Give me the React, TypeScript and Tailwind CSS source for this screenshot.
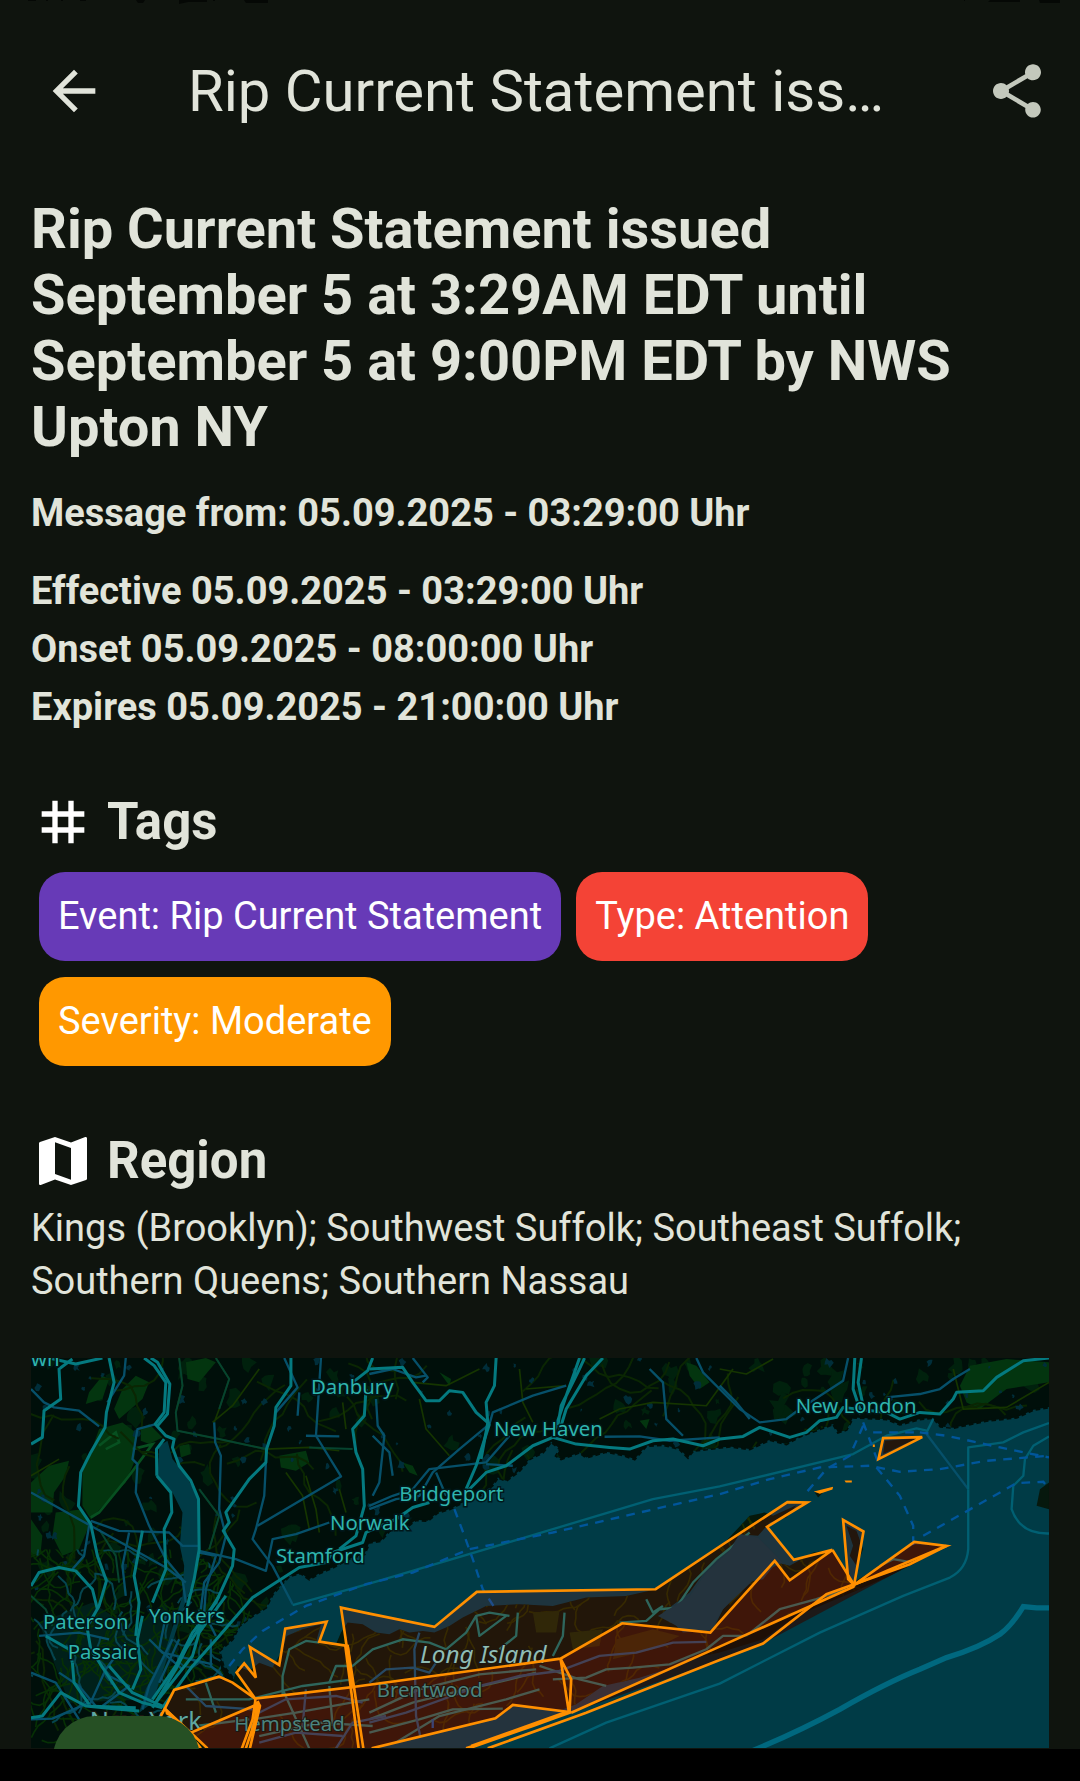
import React from "react";
import { MdArrowBack, MdMap, MdShare, MdTag } from "react-icons/md";

const title =
  "Rip Current Statement issued September 5 at 3:29AM EDT until September 5 at 9:00PM EDT by NWS Upton NY";

const times = [
  { label: "Effective", value: "05.09.2025 - 03:29:00 Uhr" },
  { label: "Onset", value: "05.09.2025 - 08:00:00 Uhr" },
  { label: "Expires", value: "05.09.2025 - 21:00:00 Uhr" },
];

const tags = [
  { text: "Event: Rip Current Statement", color: "bg-[#673ab7]" },
  { text: "Type: Attention", color: "bg-[#f44336]" },
  { text: "Severity: Moderate", color: "bg-[#ff9800]" },
];

// Small repeatable pseudo-random generator for the ground texture.
function seeded(seed: number) {
  let s = seed;
  return () => {
    s = (s * 16807) % 2147483647;
    return s / 2147483647;
  };
}

function buildPatches(count: number, seed: number, size: number) {
  const rnd = seeded(seed);
  return Array.from({ length: count }, () => {
    const x = 36 + rnd() * 3051;
    const y = 27 + rnd() * 900;
    const n = 9;
    const r = size * (0.4 + rnd());
    const pts = Array.from({ length: n }, (_, i) => {
      const a = (i / n) * Math.PI * 2;
      const k = r * (0.4 + rnd());
      return `${Math.round(x + Math.cos(a) * k)},${Math.round(y + Math.sin(a) * k * 1.2)}`;
    });
    return pts.join(" ");
  });
}

function buildTracks(count: number, seed: number, step: number, width = 3051) {
  const rnd = seeded(seed);
  return Array.from({ length: count }, () => {
    let x = 36 + rnd() * width;
    let y = 27 + rnd() * 1100;
    let a = rnd() * Math.PI * 2;
    const pts = [`${Math.round(x)},${Math.round(y)}`];
    for (let i = 0; i < 9; i++) {
      a += (rnd() - 0.5) * 1.3;
      x += Math.cos(a) * step;
      y += Math.sin(a) * step;
      pts.push(`${Math.round(x)},${Math.round(y)}`);
    }
    return pts.join(" ");
  });
}

const woods = buildPatches(220, 71, 20);
const ponds = buildPatches(220, 913, 8);
const lanes = buildTracks(120, 4021, 32);
const islandLanes = buildTracks(420, 577, 18);
const cityLanes = buildTracks(260, 8191, 20, 700);
const cityStreets = buildTracks(60, 1299, 16, 600);

const mainland =
  "M0 0H3100V172L3040 182L2990 205L2900 215L2800 236L2762 232L2740 206L2700 210L2640 226L2600 210L2560 208L2500 205L2480 242L2455 250L2440 225L2400 240L2340 262L2300 285L2250 272L2190 300L2130 292L2020 305L2005 325L1980 300L1930 287L1880 290L1845 330L1810 318L1760 308L1700 325L1680 310L1625 330L1610 320L1622 300L1595 278L1570 310L1530 330L1500 365L1460 395L1435 385L1420 408L1380 440L1330 460L1290 480L1255 490L1225 515L1190 512L1160 535L1110 545L1085 575L1050 580L1035 615L990 628L940 655L900 672L870 690L845 672L810 680L760 735L740 775L700 800L660 830L640 870L600 905L612 950L640 985L700 1050V1200H0Z";

const island =
  "M437 1080L465 1022L600 990L640 1000L655 950L690 965L720 940L760 955L790 900L802 860L850 840L905 825L890 880L950 885L965 850L985 820L1030 825L1070 850L1110 855L1140 840L1170 850L1210 845L1245 850L1290 830L1330 805L1400 770L1500 765L1600 770L1700 745L1820 740L1910 720L2010 655L2110 585L2190 500L2235 490L2260 500L2330 468L2300 505L2250 520L2215 560L2160 555L2130 600L2060 660L2010 730L1930 790L1990 850L2080 840L2110 780L2180 700L2230 690L2270 640L2310 650L2380 610L2440 602L2500 700L2600 640L2683 585L2780 590L2700 635L2600 685L2500 728L2330 800L2230 870L2100 910L2000 930L1940 960L1860 985L1750 1010L1670 1065L1610 1088L1500 1070L1430 1107L1250 1150L1050 1197H400Z";

const highways = [
  "M375 27L405 50L440 100L435 190L408 225L440 260L465 270L460 295L480 350L515 395L538 450L540 600L525 690L505 770",
  "M395 27L415 40L452 105L445 195L415 230",
  "M413 380L412 300L435 270M413 380L455 430L458 490L435 540L440 660L400 760",
  "M270 27L285 100L262 190L258 235L215 310L185 370L178 470L215 525L235 620L262 695L240 770L200 840",
  "M36 285L70 265L75 185L125 150L120 60L160 30M36 710L60 670L120 655L170 665L220 720L235 780",
  "M90 27L170 45L250 27M1060 27L1045 65L1000 100",
  "M815 27L815 110L770 175L765 230L742 300L740 340L690 390L620 490L630 520L612 545L645 600L640 650L590 760L520 850L470 950L400 1050",
  "M1040 120L1035 200L1000 240L1010 310L1030 360L1035 470L1010 560L960 600",
  "M430 1075L520 950L600 860L700 745L770 700L840 655L920 640L940 610L1030 580L1040 550L1130 510L1180 475L1230 460",
  "M400 1075L470 960L500 900L600 740M410 1060L520 920L540 850L620 740",
  "M1340 430L1400 370L1460 350L1540 290L1600 265L1670 285L1770 295L1830 300L1900 275L1960 270L2050 290L2100 270L2170 262L2220 235L2310 265L2360 250L2400 215L2450 205L2470 175L2600 190L2640 210L2700 190L2760 195L2800 150L2810 130L2890 125L2930 85L3010 35L3087 27",
  "M1605 245L1640 140L1680 27M1620 245L1640 180L1700 80L1750 27M1615 230L1625 170L1675 70L1695 27",
  "M1430 27L1425 110L1400 160L1405 220L1385 330M1050 60L1150 55L1180 100L1220 155L1260 155L1290 125L1330 130L1370 190L1410 225",
  "M1410 225L1370 350L1340 420M2505 27L2500 120L2520 180M2525 27L2515 100L2530 170",
  "M200 1070L300 1080L360 1085M36 1105L70 1100L125 1030L200 1070L350 1075",
  "M205 840L215 900L300 1030L370 1060L430 1075M160 940L165 1000L210 1065M340 1020L365 960L355 870L370 800",
  "M370 545L345 680L360 760L350 860M80 860L150 900L160 940M270 950L340 1030L430 1070",
];

const blueRoads = [
  "M36 120L75 160L105 175L180 185L240 232M320 27L315 80L265 160",
  "M410 225L355 240L340 330L355 345L350 430L390 530L440 630L490 690L500 760",
  "M585 220L588 280L605 320L600 480L620 560L600 640L555 700L545 780",
  "M795 27L835 115L770 190M740 340L735 440L710 540L700 570L760 650L820 765",
  "M36 430L215 530L440 655L500 700M905 27L890 260L965 382L715 530",
  "M215 515L300 545L400 548L450 550L490 590H540M540 605L650 630L740 665L760 570L830 555L930 520",
  "M1050 480L1130 450L1200 440L1240 370L1320 300L1410 225L1420 190L1540 140L1640 110",
  "M1050 470L1120 440L1180 420L1230 360L1400 340L1470 260",
  "M1400 345L1480 350M1250 370L1280 440M1180 27L1225 85L1210 100",
  "M1050 75L1120 60L1190 85L1220 80M1755 263L1860 262L1950 275L2100 265",
  "M2030 27L2050 70L2130 150L2160 180L2220 220L2300 210L2340 180L2470 95L2485 27",
  "M2100 110L2150 160L2190 210M2600 145L2700 135L2760 120L2800 90L2850 60",
  "M1890 60L1930 100L1940 210L1990 260M120 970L180 1010L230 1070M60 860L180 850L270 870",
  "M36 970L110 1000L180 1110M320 880L260 960L210 1070M330 550L310 650L320 740",
  "M540 610L590 620L560 720L555 790L590 860M440 800L420 900L490 960",
  "M840 130L835 200M860 260L960 262M2720 255L2845 420",
  "M36 1110L100 1108L210 1060M390 870L430 910L580 945M210 530L195 620L160 660",
  "M460 870L390 1010L370 1080M480 870L420 1000M270 980L330 1010L250 1070M575 870V950L610 980",
  "M1070 150L1075 230L1095 260L1080 400L1060 440M1060 260L1110 310L1120 380",
];

const minorRoads = [
  "M480 27L490 110L470 190L475 245L600 270L740 300L870 295L960 305",
  "M590 27L630 90L600 180L585 220M720 60L640 170L580 220",
  "M800 370L850 440L870 540M860 380L890 480L900 550M960 420L980 490",
  "M36 380L120 330M540 420L600 500L570 600M970 160L980 240",
  "M1180 100L1280 110L1380 60M1500 60L1510 160L1540 220M1520 120L1640 110",
  "M1200 150L1220 240L1290 320M1740 210L1800 180L1900 160L2060 170L2140 60",
  "M2100 60L2180 75L2260 30M2800 60L2830 180L2960 175L3087 100",
];

const islandRoads = [
  "M790 1040L790 980L810 900L860 875L900 880M930 1000L950 950L1000 950L1060 900L1150 870L1230 880L1280 900",
  "M1280 900L1340 850L1370 800L1410 790L1470 800M1370 800L1380 860L1460 800",
  "M1495 790L1490 860L1440 900M1635 790L1630 860L1600 920M1800 820L1880 815L1920 780L1970 775L2020 700L2090 630L2190 550",
  "M1050 1110L1180 1060L1300 1030L1430 1000L1550 970M1050 1150L1200 1110L1300 1080L1450 1078",
  "M1050 1090L1200 1020L1380 975L1550 960M1100 1197L1260 1100L1460 1050L1560 1020",
  "M1600 990L1700 985L1760 960L1840 955L1950 945L2060 900L2110 860L2180 860L2280 780L2390 750L2480 720",
  "M700 1110L830 1090L1050 1050M720 1160L900 1120L1060 1130M790 1020L870 1197M930 1010L940 1130",
  "M500 1050L690 1050L850 1010L1000 990M560 1000L590 1090M530 1130L690 1110",
  "M1880 750L1900 790L1930 770M1560 950L1680 990L1760 1010M2580 650L2620 630L2680 640",
];

const blueIslandRoads = [
  "M1050 1000L1100 960L1180 955L1230 970L1250 940M1200 850L1185 900L1190 1100L1210 1197",
  "M1050 1120L1160 1090L1380 1010L1500 980L1620 965L1740 920L1850 910L1960 880L2060 878",
  "M700 1100L800 1050L950 1040L1030 1060M860 1020L850 1130M500 1010L560 1070L700 1080",
  "M720 1180L830 1150L970 1160M950 1197L1000 1120L1100 1100",
];

const northZones = [
  "M965 775L1050 793L1245 833L1372 728L1908 720L2100 592L2303 459L2362 460L2242 533L2322 632L2438 602L2310 693L2265 635L2100 818L2072 850L1808 822L1623 928L1000 1013Z",
  "M708 1048L652 970L675 942L710 985L692 893L780 947L798 838L922 817L900 877L985 890L1000 1013Z",
  "M600 982L465 1022L437 1078L515 1150L708 1068V1048L640 1000Z",
  "M2590 267L2707 264L2576 330Z",
  "M2470 512L2531 547L2503 707L2485 690Z",
];

const southZones = [
  "M1000 1013L1623 928L1652 1088L1480 1067L1428 1107L1050 1197H1030Z",
  "M708 1048L1000 1013L1028 1197H688Z",
  "M515 1150L708 1068L680 1197H560Z",
  "M1623 928L1808 822L2072 850L2265 635L2310 693L2438 602L2503 707L1655 1090Z",
  "M2503 707L2683 578L2780 590L2540 690Z",
];

const outlines = [
  ...northZones,
  "M1623 928L1655 990L1650 1088L1480 1067L1428 1107L1057 1197M1623 928L1648 1088",
  "M1655 1088L1540 1130L1340 1197M1650 1090L1348 1197M1640 1088L1355 1190",
  "M437 1078L425 1100M437 1078L470 1112M515 1150L565 1197M515 1155L540 1197M532 1180L545 1197",
  "M708 1058L700 1110L668 1197M715 1055L722 1070L680 1197M722 1070L692 1197",
  "M985 890L1005 1020L1032 1197M978 890L1018 1197",
  "M1655 1090L2100 892L2503 712M2438 602L2503 707L2683 578L2780 590L2600 665L2503 707",
  "M2780 590L2670 645L2420 735L2230 883L2100 932L1700 1090L1405 1197",
];

const labels = [
  { x: 875, y: 136, text: "Danbury" },
  { x: 1424, y: 262, text: "New Haven" },
  { x: 2328, y: 193, text: "New London" },
  { x: 1140, y: 456, text: "Bridgeport" },
  { x: 932, y: 544, text: "Norwalk" },
  { x: 770, y: 640, text: "Stamford" },
  { x: 390, y: 820, text: "Yonkers" },
  { x: 72, y: 840, text: "Paterson" },
  { x: 146, y: 930, text: "Passaic" },
];

function Lines({ paths, stroke, width }: { paths: string[]; stroke: string; width: number }) {
  return (
    <g fill="none" stroke={stroke} strokeWidth={width} strokeLinejoin="round">
      {paths.map((d) => (
        <path key={d} d={d} />
      ))}
    </g>
  );
}

function Tracks({ tracks, stroke, width }: { tracks: string[]; stroke: string; width: number }) {
  return (
    <g fill="none" stroke={stroke} strokeWidth={width} strokeLinejoin="round">
      {tracks.map((p) => (
        <polyline key={p} points={p} />
      ))}
    </g>
  );
}

function RegionMap() {
  return (
    <svg
      viewBox="36 27 3051 1170"
      className="block w-full"
      role="img"
      aria-label="Map of the affected region"
    >
      <defs>
        <clipPath id="land">
          <path d={mainland} />
        </clipPath>
        <clipPath id="isle">
          <path d={island} />
        </clipPath>
        <clipPath id="city">
          <path d="M36 600H520L640 700L700 800L600 940L700 1197H36Z" />
        </clipPath>
      </defs>

      <rect x="0" y="0" width="3120" height="1200" fill="#003b46" />
      <path d={mainland} fill="#000f0a" stroke="#000f0a" strokeWidth="8" strokeDasharray="14 9" />

      <g clipPath="url(#land)">
        {woods.map((p) => (
          <polygon key={p} points={p} fill="#00210d" />
        ))}
        <g fill="#03350f">
          <path d="M240 240L310 220L350 250L345 340L320 400L270 450L215 510L190 470L190 370L215 310Z" />
          <path d="M36 400L90 350L150 335L140 380L105 430L100 490L36 490ZM36 510L70 560L65 610L36 620Z" />
          <path d="M110 490L190 480L210 530L180 600L130 620L100 560Z" />
          <path d="M210 130L250 80L270 90L250 150L200 165ZM310 120L350 80L390 100L370 150L300 210L285 180Z" />
          <path d="M365 240L390 225L430 265L390 285L365 275ZM500 40L560 27L590 40L540 100L505 90Z" />
          <path d="M480 290L510 285L515 315L485 325ZM780 320L860 305L870 340L830 365L785 355Z" />
          <path d="M2000 40L2030 50L2070 100L2040 120L2010 80ZM2850 50L2960 30L3087 40V100L2960 120L2880 180L2840 160L2820 110Z" />
          <path d="M1150 340L1180 350L1195 380L1170 370ZM1860 215L1890 210L1880 240ZM1260 70L1295 90L1290 110Z" />
        </g>
        <path d="M240 290L290 250L300 280L260 300M340 300L400 285L330 380L240 490L215 505" fill="none" stroke="#075020" strokeWidth="8" />
        <Tracks tracks={lanes} stroke="#0a2603" width={6} />
        {ponds.map((p) => (
          <polygon key={p} points={p} fill="#002e3a" />
        ))}
        <g clipPath="url(#city)">
          <path d="M60 820L220 760L340 840L440 760L480 900L400 1050L150 1060Z" fill="#00201a" />
          <Tracks tracks={cityLanes} stroke="#063005" width={5} />
          <Tracks tracks={cityStreets} stroke="#05454f" width={6} />
        </g>
        <path d="M420 290L445 275L460 330L500 380L535 440L538 590L525 690L505 740L400 1060L360 1090L380 1020L440 900L490 740L495 650L482 590L490 490L460 430L415 385Z" fill="#003b46" />
      </g>

      <Lines paths={minorRoads} stroke="#153500" width={5} />
      <Lines
        paths={[
          "M870 295L1000 300M480 27L490 110L470 190L475 245L600 270L740 300M590 27L630 90L600 180M540 420L600 500L570 600M36 740L80 780L100 830M300 700L290 620L240 540",
        ]}
        stroke="#06442f"
        width={6}
      />
      <Lines paths={blueRoads} stroke="#06506a" width={7} />
      <Lines paths={highways} stroke="#047a80" width={9} />

      <path d={island} fill="#05180a" />
      <g clipPath="url(#isle)">
        <Tracks tracks={islandLanes} stroke="#1c2e00" width={5} />
        <path d="M1230 790L1300 800L1280 830L1240 830ZM1540 790L1620 785L1610 850L1550 850ZM1650 850L1750 840L1740 890L1660 900ZM1790 870L1900 840L1980 860L1900 900L1780 930Z" fill="#152c08" />
      </g>
      <path d="M2480 530L2510 545L2530 600L2510 650L2490 620L2500 590ZM2385 430L2410 430L2395 445ZM3060 420L3087 400V480L3050 470ZM2595 275L2690 268L2590 315Z" fill="#06180d" />
      <Lines paths={islandRoads} stroke="#137368" width={7} />
      <Lines paths={blueIslandRoads} stroke="#0b5270" width={7} />

      <Lines
        paths={[
          "M820 768L1050 703L1500 570L1900 450L2100 412L2500 315L2600 260L2690 238L2720 245M2720 250L2740 210",
          "M2845 420V600Q2840 660 2790 685L2650 740L2400 850L2100 1003L1760 1120L1590 1197",
          "M2845 420V295L2950 280L3010 250L3087 222M3087 262L3040 290L3015 330L3010 380L2980 410L2975 480Q3000 555 3087 553",
        ]}
        stroke="#006073"
        width={7}
      />
      <path d="M2200 1203Q2330 1150 2460 1080Q2600 1000 2700 960L2780 925Q2880 895 2940 855Q2975 830 3010 772L3050 776H3087" fill="none" stroke="#00687f" strokeWidth="16" />
      <g fill="none" stroke="#00569b" strokeWidth="7" strokeDasharray="26 22">
        <path d="M630 950L670 900L730 845L860 770L1040 705L1180 670L1350 600L1600 550L2100 435L2250 390L2400 355L2550 350L2640 368L2760 360L2900 335L3087 320" />
        <path d="M1305 480L1335 560L1360 630L1390 720L1425 775" />
        <path d="M2570 355L2640 440L2680 530V590M2710 560L2860 475L2990 402L3070 398L3087 420M2700 250L2780 260L2940 295L3087 325" />
        <path d="M2530 230L2490 320L2420 360L2360 430M2530 220L2560 300L2575 340M2560 250L2700 250" />
        <path d="M1240 1110V1140L1270 1185L1310 1197M1425 1110L1400 1180M1490 1080V1110" />
      </g>

      <g fontFamily="'Noto Sans', 'Open Sans', sans-serif" fontSize="61" fill="#2fb5ae" stroke="#00181b" strokeWidth="9" paintOrder="stroke">
        <text x="36" y="52">wn</text>
        {labels.map((l) => (
          <text key={l.text} x={l.x} y={l.y}>
            {l.text}
          </text>
        ))}
      </g>

      <g fill="#f40a0a" fillOpacity="0.12">
        {northZones.map((d) => (
          <path key={d} d={d} />
        ))}
      </g>
      <g fill="#e61208" fillOpacity="0.26">
        {southZones.map((d) => (
          <path key={d} d={d} />
        ))}
      </g>
      <path d="M1655 1090L2503 712L2780 590L2230 883L2100 932Z" fill="#2a0c04" fillOpacity="0.7" />
      <path d="M1057 1197L1428 1107L1480 1067L1650 1088L1340 1197Z" fill="#24333d" />
      <path d="M1915 800L2010 740L2060 670L2130 605L2160 555L2215 565L2290 640L2225 670L2110 780L2070 845L1990 840Z" fill="#24333d" />

      <g fontFamily="'Noto Sans', 'Open Sans', sans-serif" fontSize="61" fill="#4d837d" stroke="#1c1712" strokeWidth="6" paintOrder="stroke">
        <text x="645" y="1146">Hempstead</text>
        <text x="1072" y="1042">Brentwood</text>
        <text x="212" y="1142" fontSize="76" fill="#5fa9a2">
          New York
        </text>
        <text x="1202" y="940" fontStyle="italic" fontSize="73" fill="#8fbcb4">
          Long Island
        </text>
      </g>

      <g fill="none" stroke="#ff8f00" strokeWidth="8" strokeLinejoin="miter">
        {outlines.map((d) => (
          <path key={d} d={d} />
        ))}
      </g>
      <path d="M2382 427L2440 413L2438 421L2400 434ZM2474 394H2496V400H2478ZM2559 286H2565V294H2559ZM437 1078L478 1115L440 1095ZM708 1055L726 1068L700 1160Z" fill="#ff8f00" />
    </svg>
  );
}

function SectionTitle({ icon, children }: { icon: React.ReactNode; children: React.ReactNode }) {
  return (
    <h2 className="flex items-center gap-3 text-[51px] font-bold leading-[60px]">
      <span className="-my-1 text-[64px] text-white">{icon}</span>
      {children}
    </h2>
  );
}

export default function App() {
  return (
    <div className="relative flex h-screen min-h-[600px] flex-col overflow-hidden bg-[#0f140e] font-[Roboto,sans-serif] text-[#e1e4da]">
      <svg aria-hidden="true" viewBox="0 0 1080 4" className="absolute top-0 left-0 w-full fill-[#050805]">
        <path d="M28 0H36V1H28ZM46 0H48V1H46ZM61 0H63V1H61ZM80 0H86V1H80ZM136 0H145L143 3H138ZM179 0H207V2H188L179 4ZM213 0H215V1H213ZM244 0H268V3H246ZM964 0H965V1H964ZM990 0H1020V2H988ZM1039 0H1060V3H1040Z" />
      </svg>

      <header className="flex h-[182px] shrink-0 items-center pr-[31px] pl-[42px]">
        <button type="button" aria-label="Back" className="text-[64px]">
          <MdArrowBack />
        </button>
        <p className="mr-24 ml-[82px] min-w-0 flex-1 truncate text-[58px] leading-[72px]">{title}</p>
        <button type="button" aria-label="Share" className="text-[64px] text-[#c3c8bc]">
          <MdShare />
        </button>
      </header>

      <main className="min-h-0 flex-1 overflow-hidden px-[31px] pt-[14px]">
        <h1 className="text-[56px] leading-[66px] font-bold">{title}</h1>

        <p className="mt-6 text-[38px] leading-[58px] font-bold">Message from: 05.09.2025 - 03:29:00 Uhr</p>
        <div className="mt-5 text-[38px] leading-[58px] font-bold">
          {times.map((t) => (
            <p key={t.label}>
              {t.label} {t.value}
            </p>
          ))}
        </div>

        <section className="mt-14">
          <SectionTitle icon={<MdTag />}>Tags</SectionTitle>
          <ul className="mt-5 flex flex-wrap gap-x-[15px] gap-y-4 px-2">
            {tags.map((t) => (
              <li key={t.text} className={`rounded-[26px] px-[19px] py-4 text-[38px] leading-[57px] text-white ${t.color}`}>
                {t.text}
              </li>
            ))}
          </ul>
        </section>

        <section className="mt-[65px]">
          <SectionTitle icon={<MdMap />}>Region</SectionTitle>
          <p className="mt-[11px] mb-[50px] text-[38px] leading-[53px]">
            Kings (Brooklyn); Southwest Suffolk; Southeast Suffolk; Southern Queens; Southern Nassau
          </p>
          <RegionMap />
        </section>
      </main>

      <div className="relative h-8 shrink-0 bg-black">
        <div className="absolute bottom-full left-[53px] h-[33px] w-[147px] overflow-hidden">
          <button type="button" aria-label="Map action" className="block h-[147px] w-full rounded-[42px] bg-[#265024]" />
        </div>
      </div>
    </div>
  );
}
